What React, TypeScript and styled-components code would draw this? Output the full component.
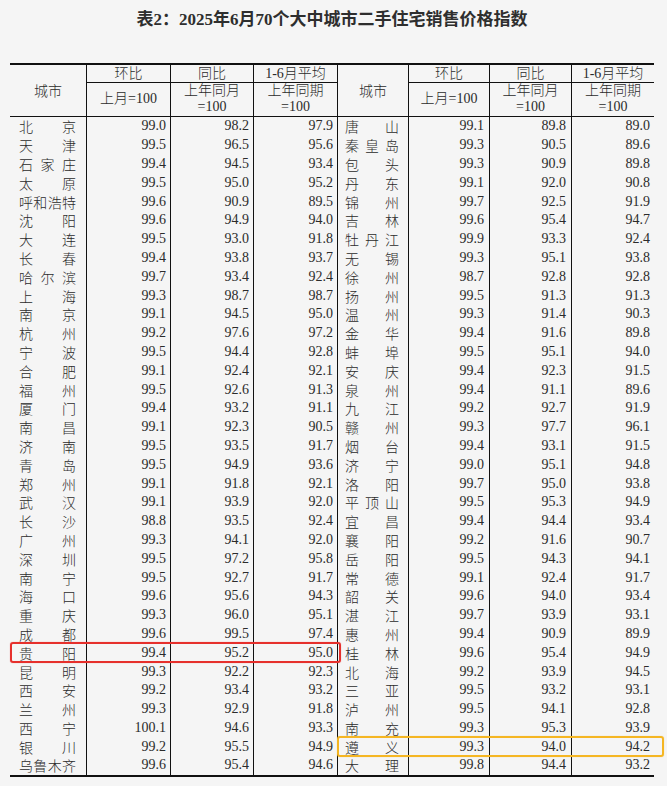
import { Fragment } from "react";
import styled, { createGlobalStyle } from "styled-components";

const GlobalStyle = createGlobalStyle`
  html, body {
    margin: 0;
    padding: 0;
    background: #f5f5f5;
  }
  body {
    font-family: "Liberation Serif", "Noto Sans CJK SC", serif;
    color: #2b2b2b;
  }
`;

type Row = [string, string, string, string];

const leftRows: Row[] = [
  ["北京", "99.0", "98.2", "97.9"],
  ["天津", "99.5", "96.5", "95.6"],
  ["石家庄", "99.4", "94.5", "93.4"],
  ["太原", "99.5", "95.0", "95.2"],
  ["呼和浩特", "99.6", "90.9", "89.5"],
  ["沈阳", "99.6", "94.9", "94.0"],
  ["大连", "99.5", "93.0", "91.8"],
  ["长春", "99.4", "93.8", "93.7"],
  ["哈尔滨", "99.7", "93.4", "92.4"],
  ["上海", "99.3", "98.7", "98.7"],
  ["南京", "99.1", "94.5", "95.0"],
  ["杭州", "99.2", "97.6", "97.2"],
  ["宁波", "99.5", "94.4", "92.8"],
  ["合肥", "99.1", "92.4", "92.1"],
  ["福州", "99.5", "92.6", "91.3"],
  ["厦门", "99.4", "93.2", "91.1"],
  ["南昌", "99.1", "92.3", "90.5"],
  ["济南", "99.5", "93.5", "91.7"],
  ["青岛", "99.5", "94.9", "93.6"],
  ["郑州", "99.1", "91.8", "92.1"],
  ["武汉", "99.1", "93.9", "92.0"],
  ["长沙", "98.8", "93.5", "92.4"],
  ["广州", "99.3", "94.1", "92.0"],
  ["深圳", "99.5", "97.2", "95.8"],
  ["南宁", "99.5", "92.7", "91.7"],
  ["海口", "99.6", "95.6", "94.3"],
  ["重庆", "99.3", "96.0", "95.1"],
  ["成都", "99.6", "99.5", "97.4"],
  ["贵阳", "99.4", "95.2", "95.0"],
  ["昆明", "99.3", "92.2", "92.3"],
  ["西安", "99.2", "93.4", "93.2"],
  ["兰州", "99.3", "92.9", "91.8"],
  ["西宁", "100.1", "94.6", "93.3"],
  ["银川", "99.2", "95.5", "94.9"],
  ["乌鲁木齐", "99.6", "95.4", "94.6"],
];

const rightRows: Row[] = [
  ["唐山", "99.1", "89.8", "89.0"],
  ["秦皇岛", "99.3", "90.5", "89.6"],
  ["包头", "99.3", "90.9", "89.8"],
  ["丹东", "99.1", "92.0", "90.8"],
  ["锦州", "99.7", "92.5", "91.9"],
  ["吉林", "99.6", "95.4", "94.7"],
  ["牡丹江", "99.9", "93.3", "92.4"],
  ["无锡", "99.3", "95.1", "93.8"],
  ["徐州", "98.7", "92.8", "92.8"],
  ["扬州", "99.5", "91.3", "91.3"],
  ["温州", "99.3", "91.4", "90.3"],
  ["金华", "99.4", "91.6", "89.8"],
  ["蚌埠", "99.5", "95.1", "94.0"],
  ["安庆", "99.4", "92.3", "91.5"],
  ["泉州", "99.4", "91.1", "89.6"],
  ["九江", "99.2", "92.7", "91.9"],
  ["赣州", "99.3", "97.7", "96.1"],
  ["烟台", "99.4", "93.1", "91.5"],
  ["济宁", "99.0", "95.1", "94.8"],
  ["洛阳", "99.7", "95.0", "93.8"],
  ["平顶山", "99.5", "95.3", "94.9"],
  ["宜昌", "99.4", "94.4", "93.4"],
  ["襄阳", "99.2", "91.6", "90.7"],
  ["岳阳", "99.5", "94.3", "94.1"],
  ["常德", "99.1", "92.4", "91.7"],
  ["韶关", "99.6", "94.0", "93.4"],
  ["湛江", "99.7", "93.9", "93.1"],
  ["惠州", "99.4", "90.9", "89.9"],
  ["桂林", "99.6", "95.4", "94.9"],
  ["北海", "99.2", "93.9", "94.5"],
  ["三亚", "99.5", "93.2", "93.1"],
  ["泸州", "99.5", "94.1", "92.8"],
  ["南充", "99.3", "95.3", "93.9"],
  ["遵义", "99.3", "94.0", "94.2"],
  ["大理", "99.8", "94.4", "93.2"],
];

const HEAD_TOP = 18;
const HEAD_SUB = 34;
const ROW_H = 18.8;

const Page = styled.div`
  width: 667px;
  padding-left: 10px;
  box-sizing: border-box;
`;

const Title = styled.h1`
  width: 644px;
  height: 63px;
  margin: 0;
  padding-top: 9px;
  box-sizing: border-box;
  font-size: 17px;
  line-height: 22px;
  font-weight: bold;
  text-align: center;
  color: #2e2e2e;
`;

const Sheet = styled.div`
  position: relative;
  width: 644px;
  display: grid;
  grid-template-columns: 77px 84px 83px 84px 71px 81px 82px 82px;
  grid-template-rows: ${HEAD_TOP}px ${HEAD_SUB}px;
  grid-auto-rows: ${ROW_H}px;
  border-top: 2px solid #111;
  border-bottom: 2px solid #111;
  font-size: 14px;
`;

const Cell = styled.div<{ $edge?: boolean }>`
  box-sizing: border-box;
  border-right: ${(p) => (p.$edge ? "none" : "1px solid #111")};
  min-width: 0;
`;

const CityHead = styled(Cell)`
  grid-row: span 2;
  border-bottom: 1px solid #111;
  display: flex;
  align-items: center;
  justify-content: center;
  padding-bottom: 2px;
  font-family: "Noto Sans CJK SC", sans-serif;
  font-weight: 300;
`;

const GroupHead = styled(Cell)`
  border-bottom: 1px solid #111;
  display: flex;
  align-items: center;
  justify-content: center;
  line-height: 16px;
  font-weight: 300;
`;

const SubHead = styled(Cell)`
  border-bottom: 1px solid #111;
  display: flex;
  flex-direction: column;
  align-items: center;
  justify-content: center;
  line-height: 16px;
  padding-bottom: 1px;
  font-weight: 300;
`;

const CityCell = styled(Cell)<{ $right?: boolean }>`
  display: flex;
  align-items: center;
  justify-content: space-between;
  padding: ${(p) => (p.$right ? "0 9px 0 7px" : "0 10px 0 9px")};
  white-space: nowrap;
  font-family: "Noto Sans CJK SC", sans-serif;
  font-weight: 300;
  line-height: 1;
`;

const NumCell = styled(Cell)<{ $pad?: number }>`
  display: flex;
  align-items: center;
  justify-content: flex-end;
  padding-right: ${(p) => p.$pad ?? 4}px;
`;

const Mark = styled.div<{ $tone: "red" | "amber" }>`
  position: absolute;
  box-sizing: border-box;
  border-radius: 3px;
  pointer-events: none;
  ${(p) =>
    p.$tone === "red"
      ? `border: 2.5px solid #e6302c; box-shadow: 0 0 1px rgba(230, 48, 44, 0.6);`
      : `border: 2px solid #f5b623; box-shadow: 0 0 1px rgba(245, 182, 35, 0.6);`}
`;

function City({ name, right }: { name: string; right?: boolean }) {
  return (
    <CityCell $right={right}>
      {name.split("").map((ch, i) => (
        <span key={i}>{ch}</span>
      ))}
    </CityCell>
  );
}

function HeaderBlock({ edge }: { edge?: boolean }) {
  return (
    <>
      <CityHead>城市</CityHead>
      <GroupHead>环比</GroupHead>
      <GroupHead>同比</GroupHead>
      <GroupHead $edge={edge}>1-6月平均</GroupHead>
    </>
  );
}

function SubBlock({ edge }: { edge?: boolean }) {
  return (
    <>
      <SubHead>上月=100</SubHead>
      <SubHead>
        <span>上年同月</span>
        <span>=100</span>
      </SubHead>
      <SubHead $edge={edge}>
        <span>上年同期</span>
        <span>=100</span>
      </SubHead>
    </>
  );
}

function rowTop(i: number) {
  return HEAD_TOP + HEAD_SUB + i * ROW_H - 1;
}

export default function App() {
  const guiyang = leftRows.findIndex((r) => r[0] === "贵阳");
  const zunyi = rightRows.findIndex((r) => r[0] === "遵义");

  return (
    <Page>
      <GlobalStyle />
      <Title>表2：2025年6月70个大中城市二手住宅销售价格指数</Title>
      <Sheet>
        <HeaderBlock />
        <HeaderBlock edge />
        <SubBlock />
        <SubBlock edge />
        {leftRows.map((l, i) => {
          const r = rightRows[i];
          return (
            <Fragment key={l[0]}>
              <City name={l[0]} />
              <NumCell>{l[1]}</NumCell>
              <NumCell>{l[2]}</NumCell>
              <NumCell>{l[3]}</NumCell>
              <City name={r[0]} right />
              <NumCell $pad={5}>{r[1]}</NumCell>
              <NumCell $pad={5}>{r[2]}</NumCell>
              <NumCell $edge $pad={4}>
                {r[3]}
              </NumCell>
            </Fragment>
          );
        })}
        <Mark
          $tone="red"
          style={{ left: 0, width: 331, top: rowTop(guiyang) - 0.5, height: 21 }}
        />
        <Mark
          $tone="amber"
          style={{ left: 327, width: 327, top: rowTop(zunyi), height: 21 }}
        />
      </Sheet>
    </Page>
  );
}
